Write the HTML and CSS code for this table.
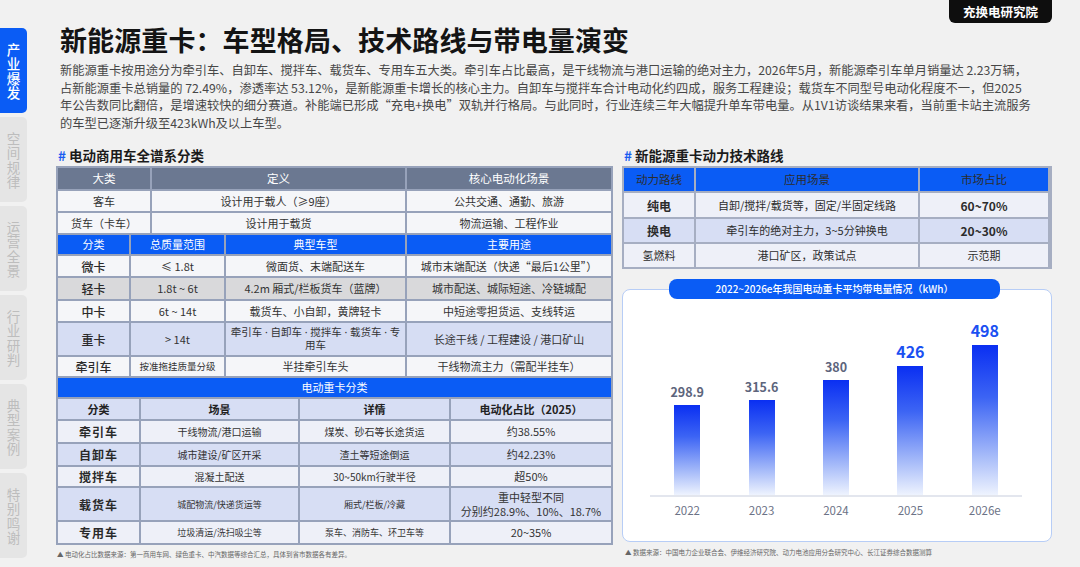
FILE: index.html
```html
<!DOCTYPE html>
<html lang="zh-CN">
<head>
<meta charset="utf-8">
<title>新能源重卡：车型格局、技术路线与带电量演变</title>
<link rel="stylesheet" href="styles.css">
</head>
<body>
<div class="page">
  <nav class="side">
    <div class="tab active"><span>产业爆发</span></div>
    <div class="tab"><span>空间规律</span></div>
    <div class="tab"><span>运营全景</span></div>
    <div class="tab"><span>行业研判</span></div>
    <div class="tab"><span>典型案例</span></div>
    <div class="tab"><span>特别鸣谢</span></div>
  </nav>

  <main class="main">
    <h1 class="title">新能源重卡：车型格局、技术路线与带电量演变</h1>
    <p class="intro">新能源重卡按用途分为牵引车、自卸车、搅拌车、载货车、专用车五大类。牵引车占比最高，是干线物流与港口运输的绝对主力，2026年5月，新能源牵引车单月销量达 2.23万辆，<br>占新能源重卡总销量的 72.49%，渗透率达 53.12%，是新能源重卡增长的核心主力。自卸车与搅拌车合计电动化约四成，服务工程建设；载货车不同型号电动化程度不一，但2025<br>年公告数同比翻倍，是增速较快的细分赛道。补能端已形成“充电+换电”双轨并行格局。与此同时，行业连续三年大幅提升单车带电量。从1V1访谈结果来看，当前重卡站主流服务<br>的车型已逐渐升级至423kWh及以上车型。</p>

    <div class="cols">
      <section class="col-left">
        <h2 class="sec-title"><span class="hash">#</span>电动商用车全谱系分类</h2>
        <div class="tbl tbl-left">
          <div class="row ga h21 slate">
            <div class="c">大类</div><div class="c">定义</div><div class="c">核心电动化场景</div>
          </div>
          <div class="row ga h20 light">
            <div class="c">客车</div><div class="c">设计用于载人（≥9座）</div><div class="c">公共交通、通勤、旅游</div>
          </div>
          <div class="row ga h20 light">
            <div class="c">货车（卡车）</div><div class="c">设计用于载货</div><div class="c">物流运输、工程作业</div>
          </div>

          <div class="row gb h19 blue">
            <div class="c">分类</div><div class="c">总质量范围</div><div class="c">典型车型</div><div class="c">主要用途</div>
          </div>
          <div class="row gb h20 light">
            <div class="c k">微卡</div><div class="c">≤ 1.8t</div><div class="c">微面货、末端配送车</div><div class="c">城市末端配送（快递“最后1公里”）</div>
          </div>
          <div class="row gb h21 grey">
            <div class="c k">轻卡</div><div class="c">1.8t ~ 6t</div><div class="c">4.2m 厢式/栏板货车（蓝牌）</div><div class="c">城市配送、城际短途、冷链城配</div>
          </div>
          <div class="row gb h20 light">
            <div class="c k">中卡</div><div class="c">6t ~ 14t</div><div class="c">载货车、小自卸，黄牌轻卡</div><div class="c">中短途零担货运、支线转运</div>
          </div>
          <div class="row gb h32 lav">
            <div class="c k">重卡</div><div class="c">&gt; 14t</div><div class="c tight">牵引车 · 自卸车 · 搅拌车 · 载货车 · 专<br>用车</div><div class="c">长途干线 / 工程建设 / 港口矿山</div>
          </div>
          <div class="row gb h19 light">
            <div class="c k">牵引车</div><div class="c small">按准拖挂质量分级</div><div class="c">半挂牵引车头</div><div class="c">干线物流主力（需配半挂车）</div>
          </div>

          <div class="row h19 blue bar-row">
            <div class="c">电动重卡分类</div>
          </div>

          <div class="row gc h20 lav2 head-c">
            <div class="c">分类</div><div class="c">场景</div><div class="c">详情</div><div class="c">电动化占比（2025）</div>
          </div>
          <div class="row gc h21 pale">
            <div class="c kc">牵引车</div><div class="c s10">干线物流/港口运输</div><div class="c s10">煤炭、砂石等长途货运</div><div class="c">约38.55%</div>
          </div>
          <div class="row gc h21 lav2">
            <div class="c kc">自卸车</div><div class="c s10">城市建设/矿区开采</div><div class="c s10">渣土等短途倒运</div><div class="c">约42.23%</div>
          </div>
          <div class="row gc h19 pale">
            <div class="c kc">搅拌车</div><div class="c s10">混凝土配送</div><div class="c s10">30~50km行驶半径</div><div class="c">超50%</div>
          </div>
          <div class="row gc h32 lav2">
            <div class="c kc">载货车</div><div class="c s9">城配物流/快递货运等</div><div class="c s9">厢式/栏板/冷藏</div><div class="c lh">重中轻型不同<br>分别约28.9%、10%、18.7%</div>
          </div>
          <div class="row gc h21 pale">
            <div class="c kc">专用车</div><div class="c s9">垃圾清运/洗扫吸尘等</div><div class="c s9">泵车、消防车、环卫车等</div><div class="c">20~35%</div>
          </div>
        </div>
        <p class="note">▲ 电动化占比数据来源：第一商用车网、绿色重卡、中汽数据等综合汇总，具体到省市数据各有差异。</p>
      </section>

      <section class="col-right">
        <h2 class="sec-title"><span class="hash">#</span>新能源重卡动力技术路线</h2>
        <div class="tbl tbl-right">
          <div class="row gr h23 blue">
            <div class="c">动力路线</div><div class="c">应用场景</div><div class="c">市场占比</div>
          </div>
          <div class="row gr h24 pale">
            <div class="c kb">纯电</div><div class="c">自卸/搅拌/载货等，固定/半固定线路</div><div class="c kb">60~70%</div>
          </div>
          <div class="row gr h23 lav2">
            <div class="c kb">换电</div><div class="c">牵引车的绝对主力，3~5分钟换电</div><div class="c kb">20~30%</div>
          </div>
          <div class="row gr h23 pale">
            <div class="c">氢燃料</div><div class="c">港口矿区，政策试点</div><div class="c">示范期</div>
          </div>
        </div>

        <div class="chart-card">
          <div class="pill">2022~2026e年我国电动重卡平均带电量情况（kWh）</div>
          <div class="plot">
            <div class="slot"><span class="val">298.9</span><div class="barv" style="height:90px"></div></div>
            <div class="slot"><span class="val">315.6</span><div class="barv" style="height:95px"></div></div>
            <div class="slot"><span class="val">380</span><div class="barv" style="height:115px"></div></div>
            <div class="slot"><span class="val hi">426</span><div class="barv" style="height:129px"></div></div>
            <div class="slot"><span class="val hi">498</span><div class="barv" style="height:150px"></div></div>
          </div>
          <div class="years">
            <span>2022</span><span>2023</span><span>2024</span><span>2025</span><span>2026e</span>
          </div>
        </div>
        <p class="note">▲ 数据来源：中国电力企业联合会、伊维经济研究院、动力电池应用分会研究中心、长江证券综合数据测算</p>
      </section>
    </div>
  </main>

  <div class="logo">充换电研究院</div>
</div>
</body>
</html>
```

FILE: styles.css
```css
* { box-sizing: border-box; margin: 0; padding: 0; }

body {
  width: 1080px;
  height: 567px;
  overflow: hidden;
  background: #f1f1f1;
  font-family: "Noto Sans CJK SC", "Noto Sans", sans-serif;
  color: #333;
}

.page {
  position: relative;
  display: flex;
  height: 567px;
}

/* ---------- sidebar ---------- */
.side {
  width: 27px;
  flex: none;
  padding-top: 28px;
  display: flex;
  flex-direction: column;
  gap: 4px;
}
.tab {
  height: 85px;
  flex: none;
  border-radius: 0 5px 5px 0;
  background: #e5e5e5;
  color: #bdbdbd;
  display: flex;
  align-items: center;
  justify-content: center;
}
.tab span {
  display: block;
  width: 14px;
  font-size: 13.5px;
  line-height: 14.5px;
  text-align: center;
}
.tab.active {
  background: #0a5cf5;
  color: #fff;
}
.tab.active span { font-weight: 500; }

/* ---------- main ---------- */
.main {
  flex: 1;
  padding-left: 29px;
}
.title {
  margin-top: 24px;
  padding-left: 4px;
  font-size: 27px;
  line-height: 32px;
  font-weight: 700;
  color: #141414;
  letter-spacing: 0.1px;
}
.intro {
  margin-top: 6px;
  padding-left: 4px;
  font-size: 12.25px;
  line-height: 17.5px;
  color: #474747;
  white-space: nowrap;
}

.cols {
  display: flex;
  gap: 9px;
  margin-top: 13px;
}
.col-left { width: 557px; flex: none; }
.col-right { width: 430px; flex: none; }

.sec-title {
  height: 20px;
  margin-bottom: 1px;
  padding-left: 2px;
  font-size: 13.5px;
  line-height: 20px;
  font-weight: 700;
  color: #1b1b1b;
}
.hash { color: #1a5cf0; margin-right: 3px; }

/* ---------- tables ---------- */
.tbl {
  display: flex;
  flex-direction: column;
  gap: 2px;
  padding: 2px;
  background: #97a2ba;
}
.row {
  display: grid;
  gap: 2px;
}
.ga { grid-template-columns: 92px 253px 204px; }
.gb { grid-template-columns: 71px 93px 179px 204px; }
.gc { grid-template-columns: 81px 157px 149px 160px; }
.gr { grid-template-columns: 70px 222px 128px; }
.bar-row { grid-template-columns: 1fr; }

.h19 { height: 19px; }
.h20 { height: 20px; }
.h21 { height: 21px; }
.h23 { height: 23px; }
.h24 { height: 24px; }
.h32 { height: 32px; }

.c {
  display: flex;
  align-items: center;
  justify-content: center;
  text-align: center;
  font-size: 11px;
  line-height: 13px;
  color: #333;
  overflow: hidden;
}

.slate .c { background: #6b7891; color: #fff; font-size: 11.5px; }
.blue .c { background: #0a5cf5; color: #fff; font-size: 11px; }
.light .c { background: #f5f6f9; }
.grey .c { background: #d9d9db; }
.lav .c { background: #d6ddf3; }
.pale .c { background: #eef0f8; }
.lav2 .c { background: #d7def4; }

.k { font-size: 12px; font-weight: 500; color: #2a2a2a; }
.kc { font-size: 12px; font-weight: 700; color: #2a2a2a; letter-spacing: 1px; }
.kb { font-size: 12px; font-weight: 700; color: #222; }
.head-c .c { font-weight: 700; font-size: 11px; color: #222; }
.small { font-size: 9.5px; }
.s10 { font-size: 10px; }
.s9 { font-size: 9px; }
.gb .c.tight {
  padding: 0;
  font-size: 10.5px;
  line-height: 13px;
  font-family: "Noto Sans", "Noto Sans CJK SC", sans-serif;
  white-space: nowrap;
}
.lh { line-height: 14px; }

.tbl-right { background: #a6aec2; }
.tbl-right .blue .c { font-size: 11.5px; }
.tbl-right .c { font-size: 11px; color: #2c2c2c; }
.tbl-right .kb { font-size: 12px; }

/* ---------- chart ---------- */
.chart-card {
  position: relative;
  margin-top: 20px;
  height: 253px;
  background: #fff;
  border: 1.5px solid #b7cdf6;
  border-radius: 8px;
  padding: 0 29px 0 27px;
}
.pill {
  position: absolute;
  top: -11px;
  left: 46px;
  width: 331px;
  height: 20px;
  border-radius: 8px;
  background: #0a5cf5;
  color: #fff;
  font-size: 10px;
  line-height: 20px;
  text-align: center;
  font-weight: 500;
}
.plot {
  margin-top: 18.5px;
  height: 188px;
  border-bottom: 2px solid #e3e6ee;
  display: grid;
  grid-template-columns: repeat(5, 1fr);
}
.slot {
  display: flex;
  flex-direction: column;
  justify-content: flex-end;
  align-items: center;
}
.val {
  font-size: 12.5px;
  line-height: 16px;
  font-weight: 700;
  color: #5d657c;
  margin-bottom: 5px;
}
.val.hi {
  font-size: 16px;
  line-height: 20px;
  color: #1b50f2;
  margin-bottom: 5px;
}
.barv {
  width: 26px;
  background: linear-gradient(to bottom, #0a2ff2 0%, #3c64f4 35%, #a9bdf9 75%, #eef3fe 100%);
}
.years {
  display: grid;
  grid-template-columns: repeat(5, 1fr);
  height: 26px;
  align-items: center;
  text-align: center;
  font-size: 11.5px;
  color: #6b7286;
}

/* ---------- notes ---------- */
.note {
  margin-top: 4px;
  padding-left: 1px;
  font-size: 6.5px;
  line-height: 10px;
  color: #666;
  white-space: nowrap;
}
.col-right .note { margin-top: 5px; padding-left: 3px; }

/* ---------- logo ---------- */
.logo {
  position: absolute;
  top: 0;
  right: 28px;
  width: 103px;
  height: 23px;
  background: #0e0e0e;
  border-radius: 0 0 6px 6px;
  color: #fff;
  font-size: 12.5px;
  font-weight: 700;
  line-height: 23px;
  text-align: center;
}
```
